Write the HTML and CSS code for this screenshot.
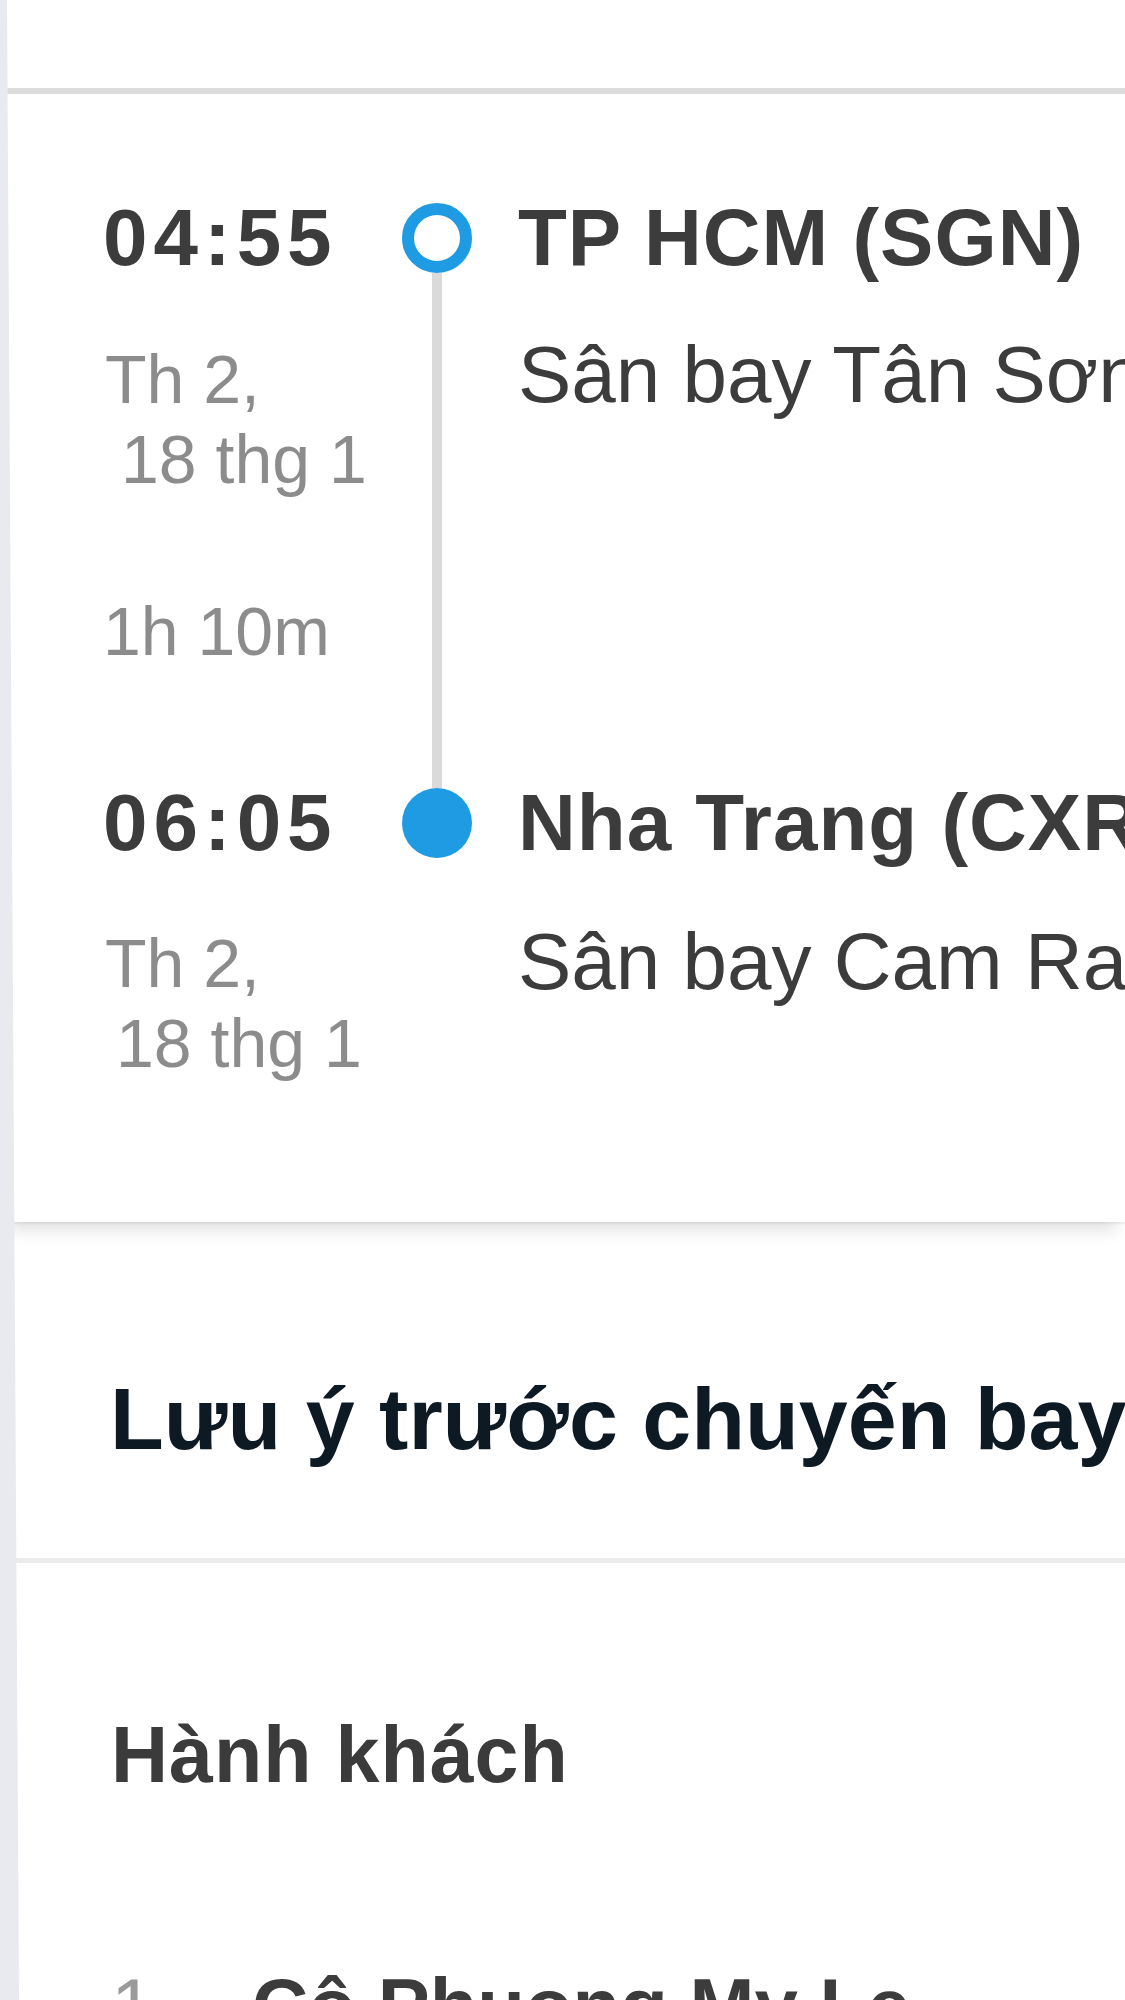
FILE: index.html
```html
<!DOCTYPE html>
<html lang="vi">
<head>
<meta charset="utf-8">
<title>Chuyến bay</title>
<link rel="stylesheet" href="styles.css">
</head>
<body>
<div class="page">
  <div class="strip">
    <svg width="20" height="2000" viewBox="0 0 20 2000" preserveAspectRatio="none"><polygon points="0,0 7,0 19,2000 0,2000" fill="#e8eaf0"/></svg>
  </div>
  <div class="main">
    <div class="topbar"></div>

    <section class="flight">
      <div class="timeline">
        <span class="time">04:55</span>
        <span class="dot dot-hollow"></span>
        <span class="city">TP HCM (SGN)</span>

        <div class="date"><span class="date-line">Th 2,</span><span class="date-line shift-1">18 thg 1</span></div>
        <div class="rail"></div>
        <div class="airport">Sân bay Tân Sơn Nhất</div>

        <div class="duration">1h 10m</div>

        <span class="time">06:05</span>
        <span class="dot dot-filled"></span>
        <span class="city">Nha Trang (CXR)</span>

        <div class="date date-last"><span class="date-line">Th 2,</span><span class="date-line shift-2">18 thg 1</span></div>
        <div class="rail-empty"></div>
        <div class="airport airport-last">Sân bay Cam Ranh</div>
      </div>
    </section>

    <section class="notes">
      <h2 class="notes-title">Lưu ý trước chuyến bay</h2>
    </section>

    <section class="passengers">
      <h3 class="passengers-title">Hành khách</h3>
      <div class="pax">
        <span class="pax-num">1</span>
        <span class="pax-name">Cô Phuong My Le</span>
      </div>
    </section>
  </div>
</div>
</body>
</html>
```

FILE: styles.css
```css
html, body {
  margin: 0;
  padding: 0;
}

body {
  width: 1125px;
  height: 2000px;
  overflow: hidden;
  background: #ffffff;
  font-family: "Liberation Sans", Arial, "Helvetica Neue", sans-serif;
  color: #3c3c3c;
}

.page {
  display: flex;
  width: 1125px;
  height: 2000px;
}

.strip {
  flex: 0 0 20px;
  margin-right: -20px;
  position: relative;
  z-index: 3;
}

.strip svg {
  display: block;
}

.main {
  flex: 1;
  min-width: 0;
}

.topbar {
  height: 88px;
  border-bottom: 6px solid #dcdcdc;
  background: #ffffff;
}

.flight {
  position: relative;
  z-index: 1;
  background: #ffffff;
  padding: 109px 0 139px 103px;
  box-shadow: 0 16px 16px -8px rgba(0, 0, 0, 0.12), 0 2px 2px rgba(0, 0, 0, 0.06);
}

.timeline {
  display: grid;
  grid-template-columns: 299px 70px minmax(0, 1fr);
}

.time {
  grid-column: 1;
  font-size: 80px;
  font-weight: 700;
  line-height: 70px;
  letter-spacing: 6px;
  color: #3c3c3c;
  white-space: nowrap;
}

.dot {
  width: 70px;
  height: 70px;
  box-sizing: border-box;
  border-radius: 50%;
}

.dot-hollow {
  border: 12px solid #1f9be3;
  background: #ffffff;
}

.dot-filled {
  background: #1f9be3;
}

.city {
  padding-left: 46px;
  font-size: 80px;
  font-weight: 700;
  line-height: 70px;
  letter-spacing: 1px;
  color: #3c3c3c;
  white-space: nowrap;
}

.date {
  grid-column: 1;
  padding-top: 66px;
  padding-left: 2px;
  font-size: 68px;
  line-height: 80px;
  color: #8c8c8c;
}

.date-line {
  display: block;
  white-space: nowrap;
}

.date-line.shift-1 {
  padding-left: 16px;
}

.date-line.shift-2 {
  padding-left: 11px;
}

.date-last {
  padding-top: 65px;
}

.rail {
  grid-column: 2;
  grid-row: span 2;
  justify-self: center;
  width: 10px;
  background: #dadada;
}

.rail-empty {
  grid-column: 2;
}

.airport {
  grid-column: 3;
  padding-left: 46px;
  padding-top: 62px;
  font-size: 80px;
  line-height: 80px;
  color: #3c3c3c;
  white-space: nowrap;
}

.airport-last {
  padding-top: 64px;
}

.duration {
  grid-column: 1;
  padding: 92px 0 117px;
  font-size: 68px;
  line-height: 80px;
  color: #8c8c8c;
  white-space: nowrap;
}

.notes {
  background: #ffffff;
  padding: 147px 0 89px 110px;
  border-bottom: 5px solid #ebebeb;
}

.notes-title {
  margin: 0;
  font-size: 88px;
  font-weight: 700;
  line-height: 100px;
  color: #0d1a24;
  white-space: nowrap;
}

.passengers {
  padding: 147px 0 0 111px;
}

.passengers-title {
  margin: 0;
  font-size: 79px;
  font-weight: 700;
  line-height: 90px;
  letter-spacing: 1px;
  color: #3b3b3b;
  white-space: nowrap;
}

.pax {
  display: flex;
  margin-top: 161px;
  font-size: 78px;
  line-height: 90px;
  white-space: nowrap;
}

.pax-num {
  width: 141px;
  flex: 0 0 141px;
  color: #9a9a9a;
}

.pax-name {
  font-weight: 700;
  color: #3c3c3c;
}
```
